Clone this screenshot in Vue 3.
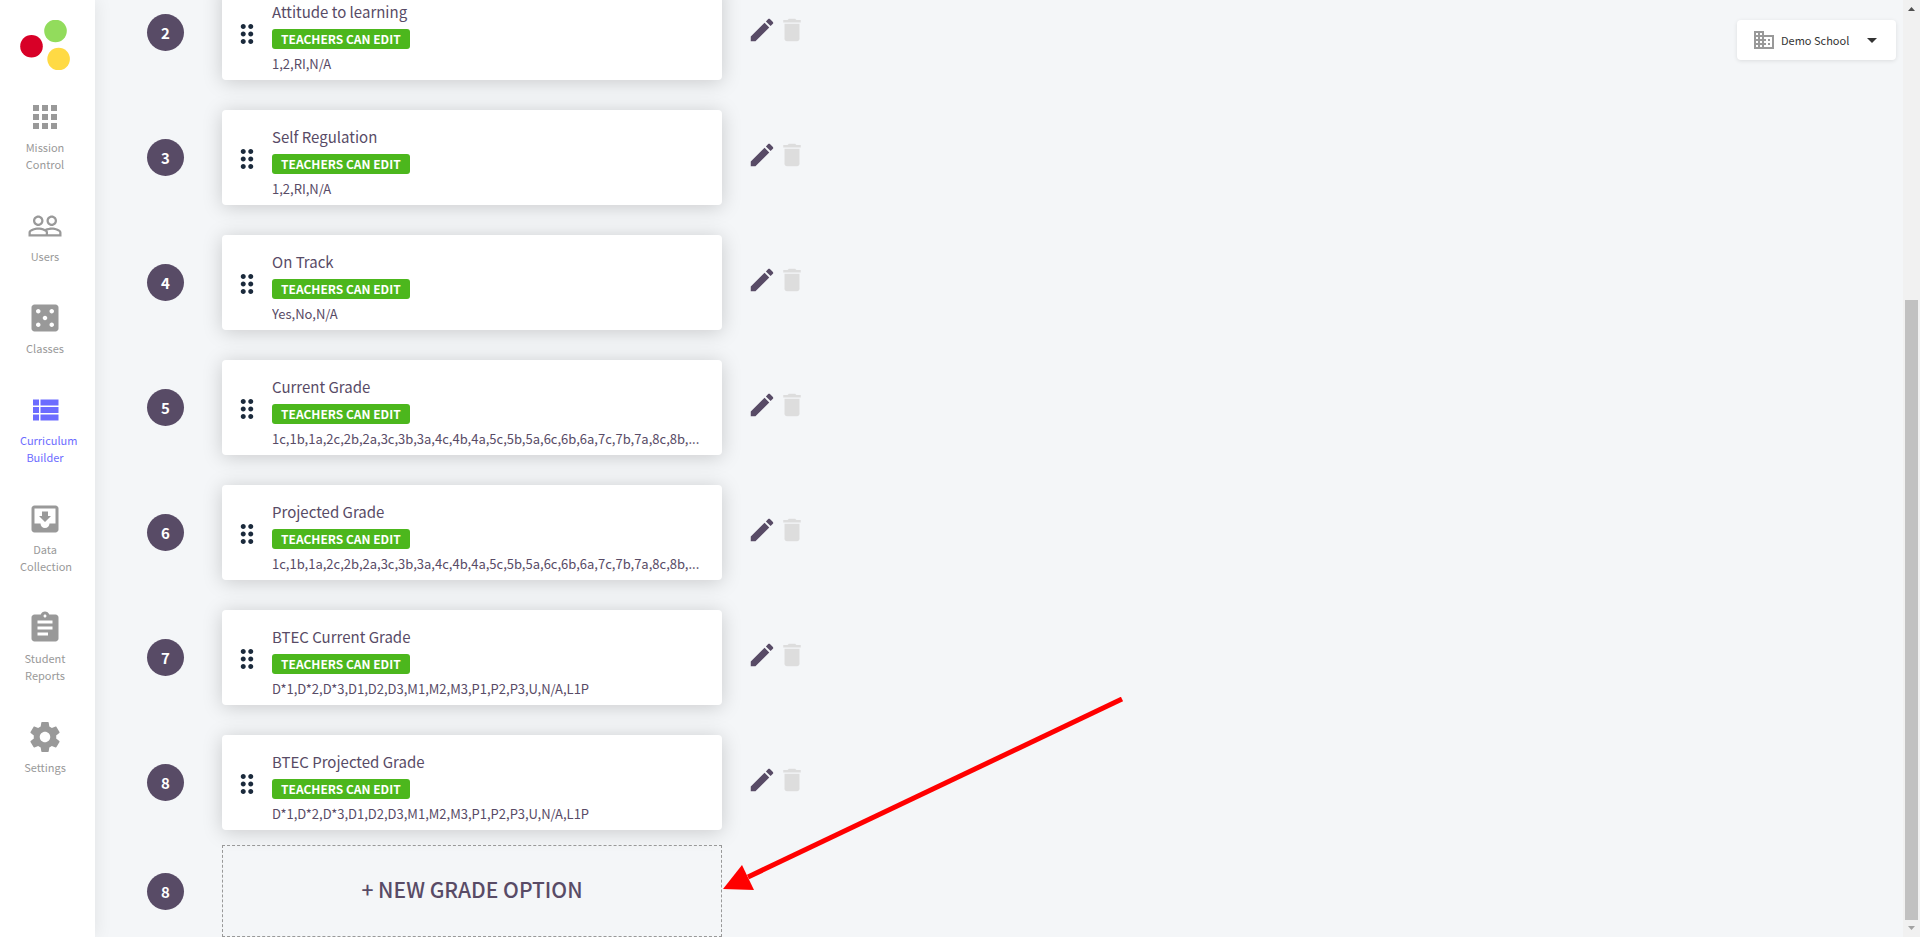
<script setup>
import { ref } from 'vue'

const menu = [
  { label: 'Mission Control', d: 'M4 8h4V4H4v4zm6 12h4v-4h-4v4zm-6 0h4v-4H4v4zm0-6h4v-4H4v4zm6 0h4v-4h-4v4zm6-10v4h4V4h-4zm-6 4h4V4h-4v4zm6 6h4v-4h-4v4zm0 6h4v-4h-4v4z' },
  { label: 'Users', d: 'M16.5 13c-1.2 0-3.07.34-4.5 1-1.43-.67-3.3-1-4.5-1C5.33 13 1 14.08 1 16.25V19h22v-2.75c0-2.17-4.33-3.25-6.5-3.25zm-4 4.5h-10v-1.25c0-.54 2.56-1.75 5-1.75s5 1.21 5 1.75v1.25zm9 0H14v-1.25c0-.46-.2-.86-.52-1.22.88-.3 1.96-.53 3.02-.53 2.44 0 5 1.21 5 1.75v1.25zM7.5 12c1.93 0 3.5-1.57 3.5-3.5S9.43 5 7.5 5 4 6.57 4 8.5 5.57 12 7.5 12zm0-5.5c1.1 0 2 .9 2 2s-.9 2-2 2-2-.9-2-2 .9-2 2-2zm9 5.5c1.93 0 3.5-1.57 3.5-3.5S18.43 5 16.5 5 13 6.57 13 8.5s1.57 3.5 3.5 3.5zm0-5.5c1.1 0 2 .9 2 2s-.9 2-2 2-2-.9-2-2 .9-2 2-2z' },
  { label: 'Classes', d: 'M19 3H5c-1.1 0-2 .9-2 2v14c0 1.1.9 2 2 2h14c1.1 0 2-.9 2-2V5c0-1.1-.9-2-2-2zM7.5 18c-.83 0-1.5-.67-1.5-1.5S6.67 15 7.5 15s1.5.67 1.5 1.5S8.33 18 7.5 18zm0-9C6.67 9 6 8.33 6 7.5S6.67 6 7.5 6 9 6.67 9 7.5 8.33 9 7.5 9zm4.5 4.5c-.83 0-1.5-.67-1.5-1.5s.67-1.5 1.5-1.5 1.5.67 1.5 1.5-.67 1.5-1.5 1.5zm4.5 4.5c-.83 0-1.5-.67-1.5-1.5s.67-1.5 1.5-1.5 1.5.67 1.5 1.5-.67 1.5-1.5 1.5zm0-9c-.83 0-1.5-.67-1.5-1.5S15.67 6 16.5 6s1.5.67 1.5 1.5S17.33 9 16.5 9z' },
  { label: 'Curriculum Builder', active: true, d: 'M4 14h4v-4H4v4zm0 5h4v-4H4v4zM4 9h4V5H4v4zm5 5h12v-4H9v4zm0 5h12v-4H9v4zM9 5v4h12V5H9z' },
  { label: 'Data Collection', d: 'M19 3H4.99c-1.11 0-1.98.9-1.98 2L3 19c0 1.1.88 2 1.99 2H19c1.1 0 2-.9 2-2V5c0-1.1-.9-2-2-2zm0 12h-4c0 1.66-1.35 3-3 3s-3-1.34-3-3H4.99V5H19v10zm-3-5h-2V7h-4v3H8l4 4 4-4z' },
  { label: 'Student Reports', d: 'M19 3h-4.18C14.4 1.84 13.3 1 12 1c-1.3 0-2.4.84-2.82 2H5c-1.1 0-2 .9-2 2v14c0 1.1.9 2 2 2h14c1.1 0 2-.9 2-2V5c0-1.1-.9-2-2-2zm-7 0c.55 0 1 .45 1 1s-.45 1-1 1-1-.45-1-1 .45-1 1-1zm2 14H7v-2h7v2zm3-4H7v-2h10v2zm0-4H7V7h10v2z' },
  { label: 'Settings', d: 'M19.43 12.98c.04-.32.07-.64.07-.98s-.03-.66-.07-.98l2.11-1.65c.19-.15.24-.42.12-.64l-2-3.46c-.12-.22-.39-.3-.61-.22l-2.49 1c-.52-.4-1.08-.73-1.69-.98l-.38-2.65C14.46 2.18 14.25 2 14 2h-4c-.25 0-.46.18-.49.42l-.38 2.65c-.61.25-1.17.59-1.69.98l-2.49-1c-.23-.09-.49 0-.61.22l-2 3.46c-.13.22-.07.49.12.64l2.11 1.65c-.04.32-.07.65-.07.98s.03.66.07.98l-2.11 1.65c-.19.15-.24.42-.12.64l2 3.46c.12.22.39.3.61.22l2.49-1c.52.4 1.08.73 1.69.98l.38 2.65c.03.24.24.42.49.42h4c.25 0 .46-.18.49-.42l.38-2.65c.61-.25 1.17-.59 1.69-.98l2.49 1c.23.09.49 0 .61-.22l2-3.46c.12-.22.07-.49-.12-.64l-2.11-1.65zM12 15.5c-1.93 0-3.5-1.57-3.5-3.5s1.57-3.5 3.5-3.5 3.5 1.57 3.5 3.5-1.57 3.5-3.5 3.5z' },
]

const levels = '1c,1b,1a,2c,2b,2a,3c,3b,3a,4c,4b,4a,5c,5b,5a,6c,6b,6a,7c,7b,7a,8c,8b,...'
const btec = 'D*1,D*2,D*3,D1,D2,D3,M1,M2,M3,P1,P2,P3,U,N/A,L1P'

const grades = [
  { no: 2, name: 'Attitude to learning', values: '1,2,RI,N/A' },
  { no: 3, name: 'Self Regulation', values: '1,2,RI,N/A' },
  { no: 4, name: 'On Track', values: 'Yes,No,N/A' },
  { no: 5, name: 'Current Grade', values: levels },
  { no: 6, name: 'Projected Grade', values: levels },
  { no: 7, name: 'BTEC Current Grade', values: btec },
  { no: 8, name: 'BTEC Projected Grade', values: btec },
]

const school = ref('Demo School')
</script>

<template>
  <div class="page">
    <aside class="sidebar">
      <a href="#" class="logo" aria-label="Home">
        <svg viewBox="0 0 50 50" width="50" height="50">
          <circle cx="35.5" cy="11" r="11.3" fill="#92dc5c" />
          <circle cx="11.5" cy="26.3" r="11.3" fill="#d80027" />
          <circle cx="38.6" cy="39" r="11.3" fill="#ffda44" />
        </svg>
      </a>
      <nav class="menu">
        <a v-for="m in menu" :key="m.label" href="#" class="menu-item" :class="{ active: m.active }">
          <svg viewBox="0 0 24 24" class="menu-icon"><path :d="m.d" /></svg>
          <span class="menu-label">{{ m.label }}</span>
        </a>
      </nav>
    </aside>

    <main class="content">
      <div class="list">
        <div v-for="g in grades" :key="g.name" class="row">
          <span class="number">{{ g.no }}</span>
          <article class="card">
            <svg viewBox="0 0 24 24" class="drag">
              <path d="M11 18c0 1.1-.9 2-2 2s-2-.9-2-2 .9-2 2-2 2 .9 2 2zm-2-8c-1.1 0-2 .9-2 2s.9 2 2 2 2-.9 2-2-.9-2-2-2zm0-6c-1.1 0-2 .9-2 2s.9 2 2 2 2-.9 2-2-.9-2-2-2zm6 4c1.1 0 2-.9 2-2s-.9-2-2-2-2 .9-2 2 .9 2 2 2zm0 2c-1.1 0-2 .9-2 2s.9 2 2 2 2-.9 2-2-.9-2-2-2zm0 6c-1.1 0-2 .9-2 2s.9 2 2 2 2-.9 2-2-.9-2-2-2z" />
            </svg>
            <div class="card-body">
              <h3 class="card-title">{{ g.name }}</h3>
              <span class="badge">TEACHERS CAN EDIT</span>
              <p class="values">{{ g.values }}</p>
            </div>
          </article>
          <div class="actions">
            <button type="button" class="icon-btn edit" :aria-label="'Edit ' + g.name">
              <svg viewBox="0 0 24 24"><path d="M3 17.25V21h3.75L17.81 9.94l-3.75-3.75L3 17.25zM20.71 7.04c.39-.39.39-1.02 0-1.41l-2.34-2.34c-.39-.39-1.02-.39-1.41 0l-1.83 1.83 3.75 3.75 1.83-1.83z" /></svg>
            </button>
            <button type="button" class="icon-btn delete" disabled :aria-label="'Delete ' + g.name">
              <svg viewBox="0 0 24 24"><path d="M6 19c0 1.1.9 2 2 2h8c1.1 0 2-.9 2-2V7H6v12zM19 4h-3.5l-1-1h-5l-1 1H5v2h14V4z" /></svg>
            </button>
          </div>
        </div>

        <div class="row row-new">
          <span class="number">8</span>
          <div class="new-wrap">
            <button type="button" class="new-option">+ NEW GRADE OPTION</button>
            <!-- callout arrow pointing at the button -->
            <svg class="arrow" viewBox="0 0 404 200" aria-hidden="true">
              <line x1="400" y1="2" x2="26" y2="180" stroke="#f00" stroke-width="5" />
              <path d="M1 192L20 168L32 193Z" fill="#f00" />
            </svg>
          </div>
        </div>
      </div>

      <div class="school">
        <svg viewBox="0 0 24 24" class="school-icon"><path d="M12 7V3H2v18h20V7H12zM6 19H4v-2h2v2zm0-4H4v-2h2v2zm0-4H4V9h2v2zm0-4H4V5h2v2zm4 12H8v-2h2v2zm0-4H8v-2h2v2zm0-4H8V9h2v2zm0-4H8V5h2v2zm10 12h-8v-2h2v-2h-2v-2h2v-2h-2V9h8v10zm-2-8h-2v2h2v-2zm0 4h-2v2h2v-2z" /></svg>
        <select v-model="school" class="school-select" aria-label="School">
          <option>Demo School</option>
        </select>
        <svg viewBox="0 0 10 5" class="caret"><path d="M0 0h10L5 5z" /></svg>
      </div>
    </main>

    <div class="scrollbar" aria-hidden="true">
      <svg viewBox="0 0 7 4" class="sb-arrow"><path d="M0 4h7L3.5 0z" fill="#505050" /></svg>
      <div class="sb-track"><div class="sb-thumb"></div></div>
      <svg viewBox="0 0 7 4" class="sb-arrow"><path d="M0 0h7L3.5 4z" fill="#a3a3a3" /></svg>
    </div>
  </div>
</template>

<style>
body {
  margin: 0;
  background: #f4f6f8;
}
</style>

<style scoped>
.page {
  display: flex;
  height: 100vh;
  overflow: hidden;
  background: #f4f6f8;
  color: #584b66;
  font-family: 'Source Sans Pro', 'Noto Sans CJK SC', sans-serif;
}
.page * {
  box-sizing: border-box;
}
button,
select {
  font-family: inherit;
  color: inherit;
}
svg {
  display: block;
}

/* sidebar */
.sidebar {
  position: relative;
  z-index: 1;
  flex: none;
  width: 95px;
  padding: 20px 20px 0;
  background: #fff;
  box-shadow: 2px 0 16px rgba(0, 0, 0, 0.07);
}
.logo {
  display: block;
  width: 50px;
  height: 50px;
}
.menu {
  margin-top: 29px;
}
.menu-item {
  display: flex;
  flex-direction: column;
  align-items: center;
  width: 50px;
  margin-bottom: 35px;
  color: #999;
  text-decoration: none;
}
.menu-item.active {
  color: #6c6cff;
}
.menu-icon {
  width: 36px;
  height: 36px;
  fill: currentColor;
}
.menu-label {
  width: 50px;
  margin-top: 4px;
  font-size: 11px;
  line-height: 17px;
  text-align: center;
}

/* grade list, scrolled to its end */
.content {
  display: flex;
  flex: 1;
  align-items: flex-start;
  justify-content: space-between;
  min-width: 0;
  padding-left: 52px;
}
.list {
  display: flex;
  flex-direction: column;
  justify-content: flex-end;
  height: 100%;
}
.row {
  display: flex;
  flex: none;
  align-items: center;
  margin-bottom: 30px;
}
.row:nth-last-child(2) {
  margin-bottom: 15px;
}
.row-new {
  margin-bottom: 0;
}
.number {
  flex: none;
  width: 37px;
  height: 37px;
  margin-right: 38px;
  border-radius: 50%;
  background: #584b66;
  color: #fff;
  font-size: 15px;
  font-weight: 700;
  line-height: 37px;
  text-align: center;
}
.card {
  display: flex;
  align-items: flex-start;
  width: 500px;
  height: 95px;
  padding: 15px 10px 0;
  border-radius: 4px;
  background: #fff;
  box-shadow: 0 2px 20px rgba(0, 0, 0, 0.18);
}
.drag {
  flex: none;
  width: 30px;
  height: 30px;
  margin: 19px 10px 0 0;
  fill: #1b2a3c;
}
.card-body {
  min-width: 0;
}
.card-title {
  margin: 0 0 5px;
  font-size: 15px;
  font-weight: 400;
  line-height: 24px;
}
.badge {
  display: block;
  width: max-content;
  padding: 0 9px;
  border-radius: 3px;
  background: #4cb71d;
  color: #fff;
  font-size: 12px;
  font-weight: 700;
  line-height: 20px;
}
.values {
  margin: 5px 0 0;
  overflow: hidden;
  font-size: 13px;
  line-height: 20px;
  text-overflow: ellipsis;
  white-space: nowrap;
}
.actions {
  display: flex;
  margin: 0 0 5px 25px;
}
.icon-btn {
  width: 30px;
  height: 30px;
  padding: 0;
  border: 0;
  background: none;
  cursor: pointer;
}
.icon-btn svg {
  width: 30px;
  height: 30px;
  fill: currentColor;
}
.icon-btn.delete {
  color: #ddd;
  cursor: default;
}
.new-wrap {
  position: relative;
}
.new-option {
  display: block;
  width: 500px;
  height: 92px;
  padding: 0 0 4px;
  border: 1px dashed #999;
  background: none;
  font-size: 21px;
  font-weight: 500;
  cursor: pointer;
}
.arrow {
  position: absolute;
  bottom: 40px;
  left: 100%;
  width: 404px;
  height: 200px;
  pointer-events: none;
}

/* school picker */
.school {
  position: relative;
  flex: none;
  width: 159px;
  height: 40px;
  margin: 20px 7px 0 0;
  border-radius: 4px;
  background: #fff;
  box-shadow: 0 1px 4px rgba(0, 0, 0, 0.1);
}
.school-select {
  width: 100%;
  height: 100%;
  padding: 0 30px 0 44px;
  border: 0;
  appearance: none;
  background: none;
  color: #333;
  font-size: 11px;
}
.school-icon {
  position: absolute;
  top: 8px;
  left: 15px;
  width: 24px;
  height: 24px;
  fill: #999;
  pointer-events: none;
}
.caret {
  position: absolute;
  top: 18px;
  right: 19px;
  width: 10px;
  height: 5px;
  fill: #333;
  pointer-events: none;
}

/* scrollbar */
.scrollbar {
  display: flex;
  flex: none;
  flex-direction: column;
  align-items: center;
  width: 17px;
  padding: 7px 0;
  background: #f1f1f1;
}
.sb-arrow {
  flex: none;
  width: 7px;
  height: 4px;
}
.sb-track {
  display: flex;
  flex: 1;
  flex-direction: column;
  justify-content: flex-end;
  margin: 6px 0;
}
.sb-thumb {
  width: 13px;
  height: 68.7%;
  background: #c1c1c1;
}
</style>
